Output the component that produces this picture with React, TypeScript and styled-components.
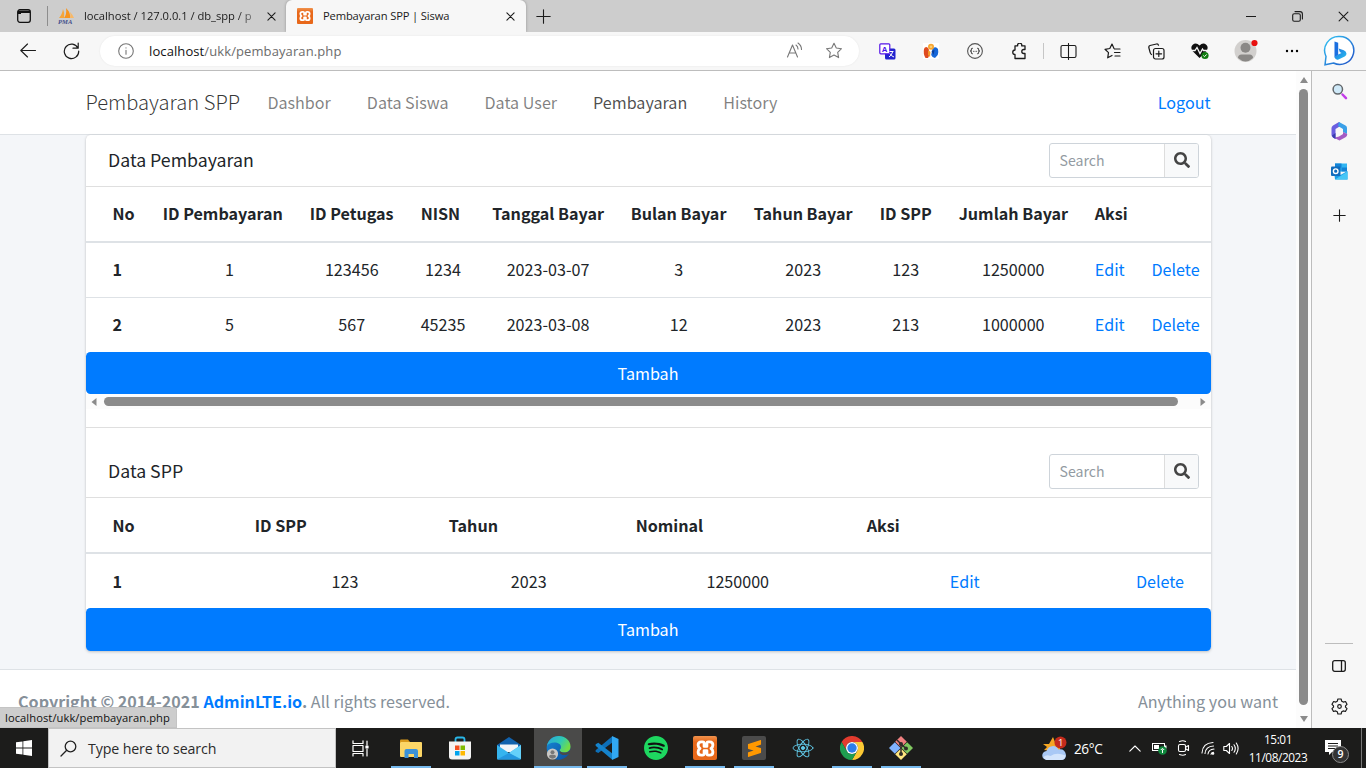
import React from "react";
import styled, { createGlobalStyle, css } from "styled-components";
import { FaSearch } from "react-icons/fa";
import { SiSublimetext, SiSpotify } from "react-icons/si";

const pageFont = `"Noto Sans CJK SC", "Noto Sans", sans-serif`;
const chromeFont = `"Open Sans", "Noto Sans", sans-serif`;

const GlobalStyle = createGlobalStyle`
  *, *::before, *::after { box-sizing: border-box; }
  body { margin: 0; overflow: hidden; background: #f7f7f7; }
  svg { display: block; flex: none; }
  a { color: #007bff; text-decoration: none; }
`;

const Screen = styled.div`
  width: 1366px;
  height: 768px;
  display: flex;
  flex-direction: column;
  overflow: hidden;
  font-family: ${chromeFont};
`;

/* ---------- browser tab strip ---------- */

const TabStrip = styled.div`
  display: flex;
  height: 32px;
  background: #cdcdcd;
  font-size: 11.2px;
  color: #1b1b1b;
`;

const TabActions = styled.div`
  width: 48px;
  display: flex;
  align-items: center;
  justify-content: center;
`;

const TabDivider = styled.div`
  width: 1px;
  height: 20px;
  margin: 6px 0 0 -1px;
  background: #8d8d8d;
`;

const Tab = styled.div<{ $active?: boolean }>`
  display: flex;
  align-items: center;
  width: ${(p) => (p.$active ? 240 : 238)}px;
  padding-left: ${(p) => (p.$active ? 11 : 10)}px;
  padding-right: ${(p) => (p.$active ? 11 : 10)}px;
  ${(p) =>
    p.$active &&
    css`
      background: #f7f7f7;
      border-radius: 6px 6px 0 0;
      box-shadow: 0 0 3px rgba(0, 0, 0, 0.3);
    `}
`;

const TabTitle = styled.span<{ $fade?: boolean; $spacing: number }>`
  flex: 1;
  margin-left: ${(p) => (p.$fade ? 9 : 10)}px;
  white-space: nowrap;
  line-height: 18px;
  letter-spacing: ${(p) => p.$spacing}px;
  ${(p) =>
    p.$fade &&
    css`
      mask-image: linear-gradient(90deg, #000 84%, transparent 99%);
    `}
`;

const NewTab = styled.div`
  flex: 1;
  display: flex;
  align-items: center;
  padding-left: 10px;
`;

const WindowButton = styled.div`
  width: 46px;
  display: flex;
  align-items: center;
  justify-content: center;
`;

/* ---------- browser toolbar ---------- */

const Toolbar = styled.div`
  display: flex;
  align-items: center;
  height: 39px;
  padding-left: 6px;
  background: #f7f7f7;
  border-bottom: 1px solid #bdbdbd;
`;

const ToolSlot = styled.div<{ $w?: number }>`
  width: ${(p) => p.$w ?? 44}px;
  height: 38px;
  display: flex;
  align-items: center;
  justify-content: center;
`;

const ToolDivider = styled.div`
  width: 1px;
  height: 16px;
  margin: 0 2px;
  background: #c6c6c6;
`;

const AddressBar = styled.div`
  display: flex;
  align-items: center;
  width: 759px;
  height: 30px;
  margin: 0 6px;
  padding: 0 16px 0 18px;
  border-radius: 15px;
  background: #fff;
  box-shadow: 0 0 2px rgba(0, 0, 0, 0.08);
  font-size: 13px;
  color: #6b6b6b;
`;

const Url = styled.span`
  flex: 1;
  margin-left: 15px;
  letter-spacing: 0.1px;
  line-height: 18px;
  b { font-weight: 400; color: #111; }
`;

const AddressActions = styled.div`
  display: flex;
  gap: 22px;
`;

/* ---------- page and side rail ---------- */

const Body = styled.div`
  display: flex;
  height: 657px;
`;

const Viewport = styled.div`
  position: relative;
  width: 1296px;
  display: flex;
  flex-direction: column;
  background: #f4f6f9;
  font-family: ${pageFont};
  font-size: 16.12px;
  line-height: 27px;
  color: #212529;
`;

const Navbar = styled.nav`
  display: flex;
  align-items: center;
  height: 64px;
  padding: 0 85.5px 0 85.5px;
  background: #fff;
  border-bottom: 1px solid #dee2e6;
`;

const Brand = styled.span`
  width: 181.9px;
  margin-bottom: 2px;
  font-size: 20.15px;
  font-weight: 300;
  color: rgba(0, 0, 0, 0.8);
  white-space: nowrap;
`;

const NavLinks = styled.div`
  flex: 1;
  display: flex;
  gap: 36px;
`;

const NavLink = styled.span<{ $active?: boolean }>`
  color: ${(p) => (p.$active ? "rgba(0,0,0,.7)" : "rgba(0,0,0,.5)")};
`;

const Card = styled.section`
  width: 1125px;
  margin-left: 86px;
  background: #fff;
  border-radius: 4.5px;
  box-shadow: 0 0 1px rgba(0, 0, 0, 0.13), 0 1px 3px rgba(0, 0, 0, 0.2);
`;

const CardHeader = styled.header<{ $spaced?: boolean }>`
  display: flex;
  align-items: center;
  justify-content: space-between;
  height: ${(p) => (p.$spaced ? 71 : 52)}px;
  padding: ${(p) => (p.$spaced ? "18px" : "0")} 12px 0 22px;
  border-top: ${(p) => (p.$spaced ? "1px solid #dfdfdf" : "0")};
  border-bottom: 1px solid #dfdfdf;
`;

const CardTitle = styled.h3`
  margin: 0 0 2px;
  font-size: 17.73px;
  font-weight: 400;
`;

const SearchGroup = styled.div`
  display: flex;
  width: 150px;
  height: 35px;
  border: 1px solid #ced4da;
  border-radius: 3px;
  overflow: hidden;
`;

const SearchField = styled.div`
  flex: 1;
  padding: 3px 10px 3px 9.5px;
  font-size: 14.1px;
  color: #939ba2;
`;

const SearchButton = styled.div`
  width: 34px;
  display: flex;
  align-items: center;
  justify-content: center;
  padding: 0 0 1px 0;
  background: #f8f9fa;
  border-left: 1px solid #ddd;
  color: #444;
`;

const DataTable = styled.table<{ $compact?: boolean }>`
  width: 1125px;
  table-layout: fixed;
  border-collapse: separate;
  border-spacing: 0;
  white-space: nowrap;

  th, td {
    height: 54px;
    padding: ${(p) => (p.$compact ? "12px 0 14px" : "13px 0 13px")} 13.2px;
  }
  th { text-align: left; font-weight: 700; }
  thead th {
    height: 56px;
    padding: ${(p) => (p.$compact ? "13px 0 14px" : "14px 0 13px")} 13.2px;
    border-bottom: 2px solid #dee2e6;
  }
  tbody tr + tr > * { border-top: 1px solid #dee2e6; height: 55px; }
  tr > th:first-child { padding-left: 26.5px; }
`;

const Cell = styled.td<{ $first?: boolean; $align?: string; $end?: number }>`
  text-align: ${(p) => p.$align ?? "center"};
  && {
    padding-left: ${(p) => (p.$first ? 26.5 : 13)}px;
    padding-right: ${(p) => p.$end ?? 13.5}px;
  }
`;

const AddButton = styled.div<{ $tall?: boolean }>`
  height: ${(p) => (p.$tall ? 43 : 42)}px;
  padding: 8px 1px 0 0;
  text-align: center;
  color: #fff;
  background: #007bff;
  border-radius: 4.5px;
`;

const HorizontalScroll = styled.div`
  display: flex;
  align-items: center;
  height: 15px;
  margin-bottom: 18px;
  padding: 0 5px;
  background: #fcfcfc;
`;

const HorizontalThumb = styled.div`
  width: 1074px;
  height: 9px;
  margin: 0 22px 0 7px;
  border-radius: 5px;
  background: #8b8b8b;
`;

const Footer = styled.footer`
  display: flex;
  justify-content: space-between;
  flex: 1;
  margin-top: 18px;
  padding: 18px 18px 0;
  background: #fff;
  border-top: 1px solid #dee2e6;
  color: #869099;
  white-space: nowrap;
`;

const StatusBubble = styled.div`
  position: absolute;
  left: 0;
  bottom: 0;
  width: 177px;
  height: 21px;
  padding-left: 5px;
  background: #cdcdcd;
  border: 1px solid #c4c4c4;
  border-left: 0;
  border-radius: 0 3px 0 0;
  font-family: ${chromeFont};
  font-size: 11.2px;
  line-height: 19px;
  letter-spacing: 0.06px;
  color: #111;
`;

const VerticalScroll = styled.div`
  width: 15px;
  display: flex;
  flex-direction: column;
  align-items: center;
  padding-top: 6px;
  background: #fcfcfc;
`;

const VerticalThumb = styled.div`
  width: 9px;
  height: 616px;
  margin: 5px 0 10px;
  border-radius: 5px;
  background: #8b8b8b;
`;

const SideRail = styled.aside`
  width: 55px;
  display: flex;
  flex-direction: column;
  align-items: center;
  padding: 0 0 2px 0;
  background: #f7f7f7;
  border-left: 1px solid #bdbdbd;
`;

const RailSlot = styled.div<{ $h?: number }>`
  height: ${(p) => p.$h ?? 40}px;
  display: flex;
  align-items: center;
`;

const RailBottom = styled.div`
  margin-top: auto;
  width: 28px;
  display: flex;
  flex-direction: column;
  align-items: center;
  padding-top: 2px;
  border-top: 1px solid #bdbdbd;
`;

/* ---------- taskbar ---------- */

const Taskbar = styled.div`
  display: flex;
  height: 40px;
  background: #1c1c1b;
  color: #fff;
`;

const TaskSlot = styled.div<{ $running?: boolean; $focused?: boolean; $w?: number }>`
  width: ${(p) => p.$w ?? 48}px;
  display: flex;
  align-items: center;
  justify-content: center;
  background: ${(p) => (p.$focused ? "#4a4a49" : "transparent")};
  ${(p) =>
    (p.$running || p.$focused) &&
    css`
      background-image: linear-gradient(#76b9ed, #76b9ed);
      background-repeat: no-repeat;
      background-position: bottom center;
      background-size: ${p.$focused ? 48 : 40}px 2px;
    `}
`;

const TaskSearch = styled.div`
  display: flex;
  align-items: center;
  width: 288px;
  padding-left: 11px;
  gap: 11px;
  background: #f2f2f2;
  border: 1px solid #c3c3c3;
  font-size: 14.2px;
  letter-spacing: -0.12px;
  color: #2b2b2b;
`;

const TaskApps = styled.div`
  display: flex;
  gap: 1px;
  margin-left: 3px;
`;

const Tray = styled.div`
  display: flex;
  align-items: center;
  margin-left: auto;
`;

const Temperature = styled.span`
  width: 51px;
  padding-left: 7px;
  font-size: 13.6px;
  letter-spacing: -0.4px;
`;

const Clock = styled.div`
  width: 67px;
  padding-right: 3px;
  text-align: center;
  font-size: 11.8px;
  line-height: 18px;
  letter-spacing: -0.4px;
  white-space: nowrap;
`;

const Notice = styled.div`
  position: relative;
  width: 49px;
  height: 40px;
  padding: 12px 0 0 12px;
  border-right: 1px solid #777;
  margin-right: 4px;
`;

const NoticeCount = styled.span`
  position: absolute;
  left: 19px;
  top: 18px;
  width: 17px;
  height: 17px;
  border: 1px solid #8b8b8b;
  border-radius: 50%;
  background: #333;
  font-size: 10.5px;
  font-weight: 600;
  line-height: 15px;
  text-align: center;
`;

/* ---------- icons ---------- */

const Line: React.FC<{ w: number; h?: number; box?: string; color?: string; sw?: number; children: React.ReactNode }> = ({
  w, h, box, color = "#1b1b1b", sw = 1.1, children,
}) => (
  <svg width={w} height={h ?? w} viewBox={box ?? `0 0 ${w} ${h ?? w}`} fill="none" stroke={color} strokeWidth={sw} strokeLinecap="round" strokeLinejoin="round">
    {children}
  </svg>
);

const CloseIcon = ({ size = 9, sw = 1.2 }: { size?: number; sw?: number }) => (
  <Line w={size} box="0 0 10 10" sw={sw}><path d="M1 1l8 8M9 1L1 9" /></Line>
);

const TabMenuIcon = () => (
  <svg width="14" height="14" viewBox="0 0 14 14">
    <rect x=".7" y=".7" width="12.6" height="12.6" rx="2.2" fill="none" stroke="#111" strokeWidth="1.3" />
    <path d="M1 1.500h12V4H4v1H1z" fill="#111" />
  </svg>
);

const PmaIcon = () => (
  <svg width="17" height="16" viewBox="0 0 17 16">
    <path d="M1 10Q4 7 5 1q2 4 1 9z" fill="#f5a53a" />
    <path d="M6 10Q9 6 8 0q5 5 4 10z" fill="#f7941d" />
    <path d="M12 10q1-3 0-6 3 3 4 6z" fill="#f9b865" />
    <text x="0" y="15.5" fontSize="6.6" fontWeight="700" fontStyle="italic" fontFamily="Liberation Serif, serif" fill="#44508c">PMA</text>
  </svg>
);

const XamppTile = styled.div<{ $s: number }>`
  width: ${(p) => p.$s}px;
  height: ${(p) => p.$s}px;
  display: flex;
  align-items: center;
  justify-content: center;
  color: #fff;
  background: linear-gradient(#f0934e, #e8681a 25%, #e8681a);
  border-radius: ${(p) => (p.$s > 20 ? 2 : 1)}px;
`;

const XamppMark = ({ size }: { size: number }) => (
  <svg width={size} height={size} viewBox="0 0 18 18" fill="none" stroke="#fff" strokeWidth="2.700" strokeLinejoin="round" strokeLinecap="round">
    <path d="M5 2.700h1.300Q7.700 2.700 7.700 4.200V7h2.600V4.200q0-1.500 1.400-1.500H13q3 0 3 3 0 2.200-1.800 3.300Q16 10.100 16 12.300q0 3-3 3h-1.300q-1.400 0-1.400-1.500V11H7.700v2.800q0 1.500-1.400 1.500H5q-3 0-3-3Q2 10.100 3.800 9 2 7.900 2 5.700q0-3 3-3z" />
  </svg>
);

const ExplorerIcon = () => (
  <svg width="22" height="19" viewBox="0 0 22 19">
    <path d="M0 1.500Q0 .5 1 .5h7l2 2.500v3H0z" fill="#d99a1c" />
    <path d="M1 3h20q1 0 1 1v13q0 1-1 1H1q-1 0-1-1V4z" fill="#fcd667" />
    <path d="M4.500 19v-7q0-2 2-2h9.500q2 0 2 2v7h-4v-4h-5.500v4z" fill="#3c92d8" />
  </svg>
);

const StoreIcon = () => (
  <svg width="24" height="24" viewBox="0 0 24 24">
    <path d="M7.500 6V3.500q0-2 2-2h5q2 0 2 2V6" fill="none" stroke="#29b7e8" strokeWidth="1.800" />
    <path d="M1 5.500h22v15q0 3-3 3H4q-3 0-3-3z" fill="#f4f4f4" />
    <path fill="#f25022" d="M7 9.500h4.500V14H7z" /><path fill="#7fba00" d="M12.500 9.500H17V14h-4.500z" />
    <path fill="#00a4ef" d="M7 15h4.500v4.500H7z" /><path fill="#ffb900" d="M12.500 15H17v4.500h-4.500z" />
  </svg>
);

const MailIcon = () => (
  <svg width="24" height="23" viewBox="0 0 24 23">
    <path d="M0 8L12 0l12 8v5H0z" fill="#1162ad" />
    <path d="M3 7.500h18V15H3z" fill="#f3f5f7" />
    <path d="M0 8l12 8 12-8v13.500q0 1-1 1H1q-1 0-1-1z" fill="#35b4ee" />
    <path d="M24 8v14L12 16z" fill="#64d1fa" /><path d="M0 22.500L12 16l12 6.500z" fill="#2497df" />
  </svg>
);

const EdgeIcon = () => (
  <svg width="25" height="24" viewBox="0 0 25 24">
    <defs>
      <linearGradient id="edgeTop" x1="0" y1="0" x2="1" y2=".5"><stop stopColor="#2aa5e0" /><stop offset=".6" stopColor="#2fc9b3" /><stop offset="1" stopColor="#72dc45" /></linearGradient>
      <linearGradient id="edgeBody" x1="0" y1="0" x2="1" y2="1"><stop stopColor="#1689d8" /><stop offset="1" stopColor="#0b4f9e" /></linearGradient>
    </defs>
    <circle cx="12.500" cy="12" r="11.800" fill="url(#edgeBody)" />
    <path d="M1 10C2 4 7 0 12.800 0 19 0 24.500 4.500 24.500 10.500c0 4-3 6-6.500 6-3 0-4.500-1-4.300-2.200.2-1 1.300-1.500 1.300-3.300C15 8 12 6.500 8.500 6.500 5 6.500 2 8 1 10z" fill="url(#edgeTop)" />
    <path d="M13.700 14.500c.8 2 4.500 2.600 7.300 1.700 1-.3 2.300-1 3-2v2.500c-2 2-6 3.300-9 1.500q-2-1.500-1.300-3.700z" fill="#4a4a49" />
    <circle cx="6.500" cy="18" r="5.600" fill="#c9c7c5" /><circle cx="6.500" cy="16.200" r="2" fill="#777" />
    <path d="M3 21q0-2.200 2-2.200h3q2 0 2 2.200-3.500 3.300-7 0z" fill="#777" />
  </svg>
);

const CodeIcon = () => (
  <svg width="24" height="24" viewBox="0 0 24 24">
    <path d="M17 .5v6.300L3.300 17 .6 15.700v-1.500z" fill="#0d6fb8" />
    <path d="M.6 8.300L3.300 6.800 17 17.200v6.300L.6 9.700z" fill="#1583cc" />
    <path d="M17 0l6.500 3v18L17 24z" fill="#31a8f3" />
  </svg>
);

const SpotifyDisc = styled.div`
  width: 24px;
  height: 24px;
  color: #1ed760;
  border-radius: 50%;
  background: #111;
`;

const SublimeTile = styled.div`
  width: 24px;
  height: 24px;
  display: flex;
  align-items: center;
  justify-content: center;
  border-radius: 2px;
  background: #4b4b4b;
  color: #ff9800;
`;

const ReactIcon = () => (
  <Line w={24} color="#61c9e8" sw={0.9}>
    <ellipse cx="12" cy="12" rx="10" ry="3.800" />
    <ellipse cx="12" cy="12" rx="10" ry="3.800" transform="rotate(60 12 12)" />
    <ellipse cx="12" cy="12" rx="10" ry="3.800" transform="rotate(120 12 12)" />
    <circle cx="12" cy="12" r="1.600" fill="#61c9e8" />
  </Line>
);

const ChromeIcon = () => (
  <svg width="24" height="24" viewBox="0 0 24 24">
    <path d="M1.600 6A12 12 0 0 1 22.400 6H12a6 6 0 0 0-5.200 9z" fill="#e33b2e" />
    <path d="M22.400 6A12 12 0 0 1 12 24l5.200-9A6 6 0 0 0 12 6z" fill="#fcc934" />
    <path d="M1.600 6A12 12 0 0 0 12 24l5.200-9A6 6 0 0 1 6.800 15z" fill="#1f9d50" />
    <circle cx="12" cy="12" r="6" fill="#fff" /><circle cx="12" cy="12" r="4.700" fill="#2d7de9" />
  </svg>
);

const GitIcon = () => (
  <svg width="24" height="24" viewBox="0 0 24 24">
    <path d="M12 0l5.800 5.800L12 11.600 6.200 5.800z" fill="#f08080" />
    <path d="M18.200 6.200L24 12l-5.800 5.800L12.400 12z" fill="#80c860" />
    <path d="M5.800 6.200L11.600 12l-5.800 5.800L0 12z" fill="#80b3ff" />
    <path d="M12 12.400l5.800 5.800L12 24l-5.800-5.800z" fill="#ffe680" />
    <path d="M8 4l4 4v10M12 8l5 4.500" fill="none" stroke="#302c28" strokeWidth="1.500" />
    <circle cx="12" cy="8" r="2" fill="#302c28" /><circle cx="12" cy="18" r="2" fill="#302c28" /><circle cx="17" cy="12.500" r="2" fill="#302c28" />
  </svg>
);

const BingIcon = () => (
  <svg width="32" height="32" viewBox="0 0 32 32">
    <defs>
      <linearGradient id="bingRing" x1="0" y1="0" x2="1" y2="1"><stop stopColor="#32c6f4" /><stop offset="1" stopColor="#214fc6" /></linearGradient>
      <linearGradient id="bingLetter" x1="0" y1="0" x2="1" y2="1"><stop stopColor="#1b6fe0" /><stop offset="1" stopColor="#2cc3ee" /></linearGradient>
    </defs>
    <path d="M16.500 1.500a14 14 0 1 1-6 26.500L2 29.800l1-8.300A14 14 0 0 1 16.500 1.500z" fill="#fff" stroke="url(#bingRing)" strokeWidth="1.500" />
    <path d="M11.500 6.500l3.700 1.300V20L11.500 22.500z" fill="#1b6fe0" />
    <path d="M11.500 22l3.700-2.500 3.300-1.500-1.700-1-1.200-3.500 5.200 1.700q2.700 1 2.700 3.500 0 1.800-1.800 2.800L15.500 24.500q-3 1-4-2.500z" fill="url(#bingLetter)" />
  </svg>
);

const TranslateIcon = () => (
  <svg width="17" height="17" viewBox="0 0 17 17">
    <rect x="6" y="5.500" width="10.500" height="11" rx="1.500" fill="#2323cf" />
    <rect x=".8" y=".8" width="10" height="10" rx="1" fill="#fff" stroke="#5514e8" strokeWidth="1.200" />
    <text x="3" y="8.500" fontSize="7.500" fontWeight="700" fontFamily="Open Sans, sans-serif" fill="#4b12ec">A</text>
    <path d="M10.500 8.500h4M13.500 9q-.5 3-3.500 5M11 10.500q1 2.500 4 3.500" stroke="#fff" fill="none" />
  </svg>
);

const PeopleIcon = () => (
  <svg width="16" height="16" viewBox="0 0 16 16">
    <rect width="16" height="16" fill="#fff" />
    <path d="M1 6q.5-2 2.500-2 2 .5 2.500 3l.8 4.500L5 15H2.500Q0 11 1 6z" fill="#df4b20" />
    <path d="M9.500 5.500q3.500-2.500 5.500.5.800 3-.3 6L12 15q-3-.5-3.800-3z" fill="#1667d9" />
    <path d="M5 7l2.500 2L7 14l-2-2z" fill="#f39a2b" /><path d="M8.500 8l3-1-1 5z" fill="#0d3f9a" />
    <circle cx="8" cy="3.800" r="3" fill="#f7a531" /><circle cx="8" cy="3.800" r="1.300" fill="#ffd076" />
  </svg>
);

const ProfileIcon = () => (
  <svg width="26" height="26" viewBox="0 0 26 26">
    <circle cx="12.500" cy="13" r="11" fill="#d2d0ce" /><circle cx="12.500" cy="9.800" r="5" fill="#8a8886" />
    <path d="M5 20q0-3.500 3.500-3.500h8q3.500 0 3.500 3.500-7.500 7-15 0z" fill="#8a8886" />
    <circle cx="21.500" cy="5" r="3.100" fill="#e81010" />
  </svg>
);

const HeartPulseIcon = () => (
  <svg width="18" height="18" viewBox="0 0 18 18">
    <path d="M8.500 16L1.500 9Q-.8 5.500 1.500 3q3.500-3 7 .5Q12 0 15.500 3q2.300 2.500 0 6z" fill="#111" />
    <path d="M0 8.500h4l2-3 3 6 2.500-4.500 1 1.500H17" stroke="#f7f7f7" strokeWidth="1.300" fill="none" />
    <circle cx="14" cy="13.500" r="3.600" fill="#107c10" /><path d="M12.300 13.500l1.200 1.200 2.200-2.300" stroke="#fff" fill="none" />
  </svg>
);

const M365Icon = () => (
  <svg width="17" height="19" viewBox="0 0 17 19">
    <path d="M8 0L2 3.500Q.5 4.500.5 6v7q0 1.500 1.500 2.400L4.500 17V7L11 3z" fill="#6a5fe0" />
    <path d="M8 0l6.500 3.500q1.500.9 1.500 2.500v6l-4-2V7L7 4z" fill="#3aa0e8" />
    <path d="M3 15.800l5.500 2.700 6-3.300q1.800-1 1.800-3.200l-4.300-2v2L8 14.500z" fill="#a45bc4" />
    <path d="M1 13.500L4.500 11v6L2 15.400z" fill="#3b3cae" />
    <path d="M5.500 7.500l3-1.700 3.300 1.900v3.700l-3.300 1.900-3-1.600z" fill="#f7f7f7" />
  </svg>
);

const OutlookIcon = () => (
  <svg width="17" height="17" viewBox="0 0 17 17">
    <path d="M4 .5h12v8H4z" fill="#31b5f2" /><path d="M4 .5h6.500v4H4zM10.500 4.500H16v4h-5.500z" fill="#1383d6" />
    <path d="M3 8l6.500 4L16.500 8v8.500H4z" fill="#189de8" /><path d="M4 16.500l12.500-8v8z" fill="#46c6f6" />
    <rect y="3.500" width="9.500" height="9.500" rx="1" fill="#0f6cbd" /><circle cx="4.700" cy="8.200" r="2.300" fill="none" stroke="#fff" strokeWidth="1.400" />
  </svg>
);

const RailSearchIcon = () => (
  <svg width="17" height="17" viewBox="0 0 17 17">
    <path d="M11.500 11.500l3.500 3.700" stroke="#c23ee8" strokeWidth="2.500" strokeLinecap="round" />
    <circle cx="6.800" cy="6.300" r="4.700" fill="#cfe9f8" stroke="#62676b" strokeWidth="1.500" />
  </svg>
);

const WeatherIcon = () => (
  <svg width="25" height="25" viewBox="0 0 25 25">
    <path d="M11 1l2 5 5 1v9L2 14l3-3-4-3h6z" fill="#f5a623" />
    <path d="M5 24a4.500 4.500 0 0 1-.5-9 6.500 6.500 0 0 1 12-1.500q6.500-1 7.500 5.500 0 5-5 5z" fill="#a9c8f5" />
    <path d="M4.500 24q-3-1-3-3 3-3 7-1 6-4 15-.5-.5 4.500-5 4.500z" fill="#d3e4fc" />
    <circle cx="18.500" cy="6.500" r="6" fill="#c42b1c" />
    <text x="16" y="10" fontSize="9.500" fill="#fff" fontFamily="Open Sans, sans-serif">1</text>
  </svg>
);

const Triangle = ({ dir }: { dir: "up" | "down" | "left" | "right" }) => {
  const d = { up: "M0 6L4 0l4 6z", down: "M0 1h8L4 7z", left: "M5.500 0v8L.5 4z", right: "M.5 0v8l5-4z" }[dir];
  const vertical = dir === "up" || dir === "down";
  return <svg width={vertical ? 8 : 6} height={vertical ? 7 : 8}><path d={d} fill="#8b8b8b" /></svg>;
};

/* ---------- page content ---------- */

const paymentColumns = [63.5, 147, 111, 71.5, 138.5, 123, 126, 79, 136, 57, 72.5];
const paymentHeads = ["No", "ID Pembayaran", "ID Petugas", "NISN", "Tanggal Bayar", "Bulan Bayar", "Tahun Bayar", "ID SPP", "Jumlah Bayar"];
const payments = [
  ["1", "1", "123456", "1234", "2023-03-07", "3", "2023", "123", "1250000"],
  ["2", "5", "567", "45235", "2023-03-08", "12", "2023", "213", "1000000"],
];

const feeColumns = [155.5, 194, 187, 231, 223, 134.5];
const feeHeads = ["No", "ID SPP", "Tahun", "Nominal"];
const fees = [["1", "123", "2023", "1250000"]];

interface RecordsProps {
  columns: number[];
  heads: string[];
  rows: string[][];
  end?: number;
}

const Records = ({ columns, heads, rows, end = 0 }: RecordsProps) => (
  <DataTable $compact={!end}>
    <colgroup>{columns.map((w, i) => <col key={i} width={w} />)}</colgroup>
    <thead>
      <tr>
        {heads.map((h) => <th key={h}>{h}</th>)}
        <th colSpan={2}>Aksi</th>
      </tr>
    </thead>
    <tbody>
      {rows.map(([no, ...values]) => (
        <tr key={no}>
          <th>{no}</th>
          {values.map((v, i) => <Cell key={i} $first={i === 0}>{v}</Cell>)}
          <Cell><a>Edit</a></Cell>
          <Cell $align={end ? "right" : "left"} $end={end}><a>Delete</a></Cell>
        </tr>
      ))}
    </tbody>
  </DataTable>
);

const Search = () => (
  <SearchGroup>
    <SearchField>Search</SearchField>
    <SearchButton><FaSearch size={16} /></SearchButton>
  </SearchGroup>
);

export default function App() {
  return (
    <Screen>
      <GlobalStyle />
      <TabStrip>
        <TabActions><TabMenuIcon /></TabActions>
        <TabDivider />
        <Tab>
          <PmaIcon />
          <TabTitle $fade $spacing={-0.02}>localhost / 127.0.0.1 / db_spp / p</TabTitle>
          <CloseIcon />
        </Tab>
        <Tab $active>
          <XamppTile $s={16}><XamppMark size={12} /></XamppTile>
          <TabTitle $spacing={-0.15}>Pembayaran SPP | Siswa</TabTitle>
          <CloseIcon />
        </Tab>
        <NewTab><Line w={15}><path d="M7.500 .8v13.400M.8 7.500h13.400" /></Line></NewTab>
        <WindowButton><Line w={10}><path d="M0 5.500h10" /></Line></WindowButton>
        <WindowButton>
          <Line w={11}><rect x=".7" y="2.700" width="7.600" height="7.600" rx="1.500" /><path d="M3 .6h5q2.400 0 2.400 2.400v5" /></Line>
        </WindowButton>
        <WindowButton><CloseIcon size={11} sw={1} /></WindowButton>
      </TabStrip>

      <Toolbar>
        <ToolSlot>
          <Line w={16}><path d="M15.500 7.500H.8M7.500 1L.8 7.500l6.700 6.500" /></Line>
        </ToolSlot>
        <ToolSlot>
          <Line w={18} sw={1.2}><path d="M15 6.200A7.200 7.200 0 1 0 15.700 9M15.200 1v5.200H10" /></Line>
        </ToolSlot>
        <AddressBar>
          <Line w={16} color="#767676"><circle cx="8" cy="8" r="7.300" /><path d="M8 7.200v4M8 4.700v.2" /></Line>
          <Url><b>localhost</b>/ukk/pembayaran.php</Url>
          <AddressActions>
            <Line w={18} color="#777"><path d="M1.500 15L6.500 3l5 12M3.200 11h6.600M10 3q2 1.500 2 4M12 1q3.500 2.500 3.500 6.500" /></Line>
            <Line w={17} color="#777"><path d="M8 1.200l2.300 4.800 5.200.7-3.800 3.600.9 5.300L8 13.100l-4.600 2.500.9-5.300L.5 6.700l5.200-.7z" /></Line>
          </AddressActions>
        </AddressBar>
        <ToolSlot><TranslateIcon /></ToolSlot>
        <ToolSlot><PeopleIcon /></ToolSlot>
        <ToolSlot>
          <Line w={16} color="#555"><circle cx="8" cy="8" r="7.400" /><path d="M5.500 5.200Q4 5.500 4.500 7L3.500 8l1 1q-.5 1.500 1 1.800M10.500 5.200q1.500.3 1 1.800l1 1-1 1q.5 1.500-1 1.800M6.500 8.300h.1M8 8.300h.1M9.500 8.300h.1" /></Line>
        </ToolSlot>
        <ToolSlot>
          <Line w={17} sw={1.3}><path d="M4 2.800h2.700a2.100 2.100 0 1 1 4 0H14v3.700h-1.200a2 2 0 1 0 0 4H14v5H4v-4a2.200 2.200 0 1 1 0-4.500z" /></Line>
        </ToolSlot>
        <ToolDivider />
        <ToolSlot>
          <Line w={17}><path d="M6 2.500H2.500Q1 2.500 1 4v9q0 1.500 1.500 1.500H6M11 2.500h3.500Q16 2.500 16 4v9q0 1.500-1.500 1.500H11M8.500 .5v16M6 2.500h5M6 14.500h5" /></Line>
        </ToolSlot>
        <ToolSlot>
          <Line w={17} sw={1.2}><path d="M10 5.500L8 1 5.800 5.500 1 6.300l3.500 3.300-.8 5.200L8 12.500M10.500 6H16M10.500 9.500H16M11 13h5" /></Line>
        </ToolSlot>
        <ToolSlot>
          <Line w={17} sw={1.2}><rect x="5.500" y="5.500" width="10.500" height="10.500" rx="2" /><path d="M10.800 8v5.500M8 10.800h5.600M3.500 11.500Q2.500 11 2 9L.8 4.500Q.6 3 2 2.500L8.500 1q1.500-.3 2 1.200" /></Line>
        </ToolSlot>
        <ToolSlot><HeartPulseIcon /></ToolSlot>
        <ToolSlot $w={47}><ProfileIcon /></ToolSlot>
        <ToolSlot $w={46}>
          <svg width="14" height="4"><circle cx="2" cy="2" r="1.200" /><circle cx="7" cy="2" r="1.200" /><circle cx="12" cy="2" r="1.200" /></svg>
        </ToolSlot>
        <ToolSlot $w={47}><BingIcon /></ToolSlot>
      </Toolbar>

      <Body>
        <Viewport>
          <Navbar>
            <Brand>Pembayaran SPP</Brand>
            <NavLinks>
              <NavLink>Dashbor</NavLink>
              <NavLink>Data Siswa</NavLink>
              <NavLink>Data User</NavLink>
              <NavLink $active>Pembayaran</NavLink>
              <NavLink>History</NavLink>
            </NavLinks>
            <a>Logout</a>
          </Navbar>
          <Card>
            <CardHeader><CardTitle>Data Pembayaran</CardTitle><Search /></CardHeader>
            <Records columns={paymentColumns} heads={paymentHeads} rows={payments} />
            <AddButton>Tambah</AddButton>
            <HorizontalScroll><Triangle dir="left" /><HorizontalThumb /><Triangle dir="right" /></HorizontalScroll>
            <CardHeader $spaced><CardTitle>Data SPP</CardTitle><Search /></CardHeader>
            <Records columns={feeColumns} heads={feeHeads} rows={fees} end={27} />
            <AddButton $tall>Tambah</AddButton>
          </Card>
          <Footer>
            <span><b>Copyright © 2014-2021 <a>AdminLTE.io</a>.</b> All rights reserved.</span>
            <span>Anything you want</span>
          </Footer>
          <StatusBubble>localhost/ukk/pembayaran.php</StatusBubble>
        </Viewport>
        <VerticalScroll><Triangle dir="up" /><VerticalThumb /><Triangle dir="down" /></VerticalScroll>
        <SideRail>
          <RailSlot><RailSearchIcon /></RailSlot>
          <RailSlot><M365Icon /></RailSlot>
          <RailSlot><OutlookIcon /></RailSlot>
          <RailSlot $h={48}><Line w={13}><path d="M6.500 .8v11.400M.8 6.500h11.400" /></Line></RailSlot>
          <RailBottom>
            <RailSlot><Line w={14} h={12} sw={1.3}><rect x=".7" y=".7" width="12.600" height="10.600" rx="2" /><path d="M9.500 1v10" /></Line></RailSlot>
            <RailSlot>
              <Line w={17} sw={1.2}><circle cx="8.500" cy="8.500" r="1.800" /><path d="M6.900 1h3.200l.6 2.200 1.600.9 2.200-.6L16 6.300l-1.500 1.600v1.300l1.500 1.500-1.600 2.800-2.200-.6-1.500.9-.6 2.200H6.900l-.6-2.200-1.600-.9-2.200.6L1 10.700l1.500-1.500V7.900L1 6.300l1.600-2.800 2.200.6 1.500-.9z" /></Line>
            </RailSlot>
          </RailBottom>
        </SideRail>
      </Body>

      <Taskbar>
        <TaskSlot>
          <svg width="16" height="16" viewBox="0 0 16 16" fill="#fff"><path d="M0 2.300l6.500-.9v6.200H0zM7.300 1.300L16 0v7.600H7.300zM0 8.400h6.500v6.200L0 13.700zM7.300 8.400H16V16l-8.700-1.200z" /></svg>
        </TaskSlot>
        <TaskSearch>
          <Line w={17} color="#222" sw={1.3}><circle cx="10.500" cy="6.500" r="5.300" /><path d="M6.700 10.300L1 16" /></Line>
          Type here to search
        </TaskSearch>
        <TaskSlot>
          <Line w={17} color="#fff" sw={1.2}><path d="M1 .8v2.700h10V.8M1 5.500h10v6H1zM1 16v-2.500h10V16M15 1v4M15 9v7" /><path d="M14 6h2v2h-2z" fill="#fff" /></Line>
        </TaskSlot>
        <TaskApps>
          <TaskSlot $running><ExplorerIcon /></TaskSlot>
          <TaskSlot><StoreIcon /></TaskSlot>
          <TaskSlot><MailIcon /></TaskSlot>
          <TaskSlot $focused><EdgeIcon /></TaskSlot>
          <TaskSlot $running><CodeIcon /></TaskSlot>
          <TaskSlot><SpotifyDisc><SiSpotify size={24} /></SpotifyDisc></TaskSlot>
          <TaskSlot $running><XamppTile $s={24}><XamppMark size={19} /></XamppTile></TaskSlot>
          <TaskSlot $running><SublimeTile><SiSublimetext size={17} /></SublimeTile></TaskSlot>
          <TaskSlot><ReactIcon /></TaskSlot>
          <TaskSlot $running><ChromeIcon /></TaskSlot>
          <TaskSlot $running><GitIcon /></TaskSlot>
        </TaskApps>
        <Tray>
          <WeatherIcon />
          <Temperature>26°C</Temperature>
          <TaskSlot $w={33}><Line w={12} h={7} color="#fff"><path d="M.8 6.200L6 1l5.200 5.200" /></Line></TaskSlot>
          <TaskSlot $w={16}>
            <svg width="15" height="14" viewBox="0 0 15 14"><rect x=".5" y="2.500" width="12" height="7" fill="none" stroke="#fff" /><path d="M2 4h5v4H2zM13 4.500h1.500v3H13z" fill="#fff" /><circle cx="10.500" cy="9.500" r="4.300" fill="#10893e" /><path d="M10.500 12V8.500M8.800 9l1.700-1.700L12.200 9" stroke="#fff" fill="none" /></svg>
          </TaskSlot>
          <TaskSlot $w={33}>
            <Line w={13} h={16} color="#fff"><rect x="1.500" y="4.500" width="7" height="7" rx="1.500" /><path d="M9 7l2.500-1.500v5L9 9M2.500 1.500q3.500-1.500 6 0M2.500 14.500q3.500 1.500 6 0" /></Line>
          </TaskSlot>
          <TaskSlot $w={15}>
            <Line w={14} color="#fff"><path d="M1 12Q1.500 2 12 1.500M4 12.500Q4.500 5.500 12.500 5M7 13q.5-4.500 6-5M10 13.300q.3-1.700 2.500-2" /><circle cx="12" cy="12.500" r=".8" fill="#fff" /></Line>
          </TaskSlot>
          <TaskSlot $w={31}>
            <Line w={16} h={13} color="#fff"><path d="M.8 4.500h2.500L6.500 1.500v10L3.300 8.500H.8zM8.800 4.500q1.400 2 0 4M11 2.800q2.600 3.700 0 7.400M13.300 1q3.600 5.500 0 11" /></Line>
          </TaskSlot>
          <Clock>15:01<br />11/08/2023</Clock>
          <Notice>
            <svg width="16" height="15" viewBox="0 0 16 15"><path d="M0 0h16v12H7l-3 3v-3H0z" fill="#fff" /><path d="M3 3.500h10M3 6h10M3 8.500h7" stroke="#1c1c1b" /></svg>
            <NoticeCount>9</NoticeCount>
          </Notice>
        </Tray>
      </Taskbar>
    </Screen>
  );
}
